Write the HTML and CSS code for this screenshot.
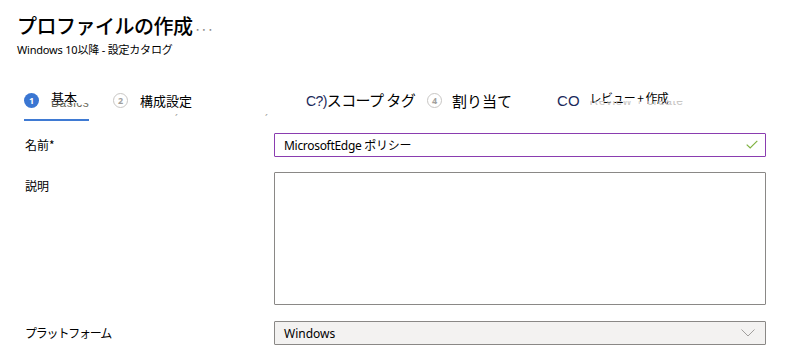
FILE: index.html
```html
<!DOCTYPE html>
<html lang="ja">
<head>
    <meta charset="UTF-8">
    <meta name="viewport" content="width=device-width, initial-scale=1.0">
    <title>プロファイルの作成</title>
    <link rel="stylesheet" href="styles.css">
</head>
<body>

<!-- Header -->
<div class="page-head">
    <h1>プロファイルの作成<span class="more">···</span></h1>
    <div class="subtitle">Windows 10以降 - 設定カタログ</div>
</div>

<!-- Wizard steps -->
<div class="steps">
    <div class="step active">
        <span class="num">1</span>
        <span class="label">基本<span class="ghost ghost-dark">Basics</span></span>
    </div>
    <div class="step step-2">
        <span class="num">2</span>
        <span class="label">構成設定</span>
        <span class="tick tick-a">ˏ</span>
        <span class="tick tick-b">ˏ</span>
    </div>
    <div class="step step-3">
        <span class="label label-lg"><span class="latin">C?)</span>スコープ タグ</span>
    </div>
    <div class="step step-4">
        <span class="num">4</span>
        <span class="label label-lg">割り当て</span>
    </div>
    <div class="step step-5">
        <span class="latin co">CO</span>
        <span class="label label-sm">レビュー + 作成<span class="ghost">Review + create</span></span>
    </div>
</div>

<!-- Form -->
<div class="form">
    <label class="field-label" for="nameInput">名前*</label>
    <div class="field field-valid">
        <input type="text" id="nameInput" value="MicrosoftEdge ポリシー">
        <svg class="check" width="12" height="9" viewBox="0 0 12 9"><path d="M0.7 4.6 L4.2 8 L11.3 0.8" fill="none" stroke="#7fb241" stroke-width="1.2"/></svg>
    </div>

    <label class="field-label label-desc" for="descInput">説明</label>
    <textarea id="descInput"></textarea>

    <label class="field-label label-platform">プラットフォーム</label>
    <div class="select">
        <span>Windows</span>
        <svg class="chevron" width="14" height="8" viewBox="0 0 14 8"><path d="M0.5 0.5 L7 7 L13.5 0.5" fill="none" stroke="#a19f9d" stroke-width="1"/></svg>
    </div>
</div>

</body>
</html>
```

FILE: styles.css
```css
body {
    margin: 0;
    padding: 12px 46px 0 17px;
    font-family: "Noto Sans", "Noto Sans CJK JP", sans-serif;
    color: #000;
    background: #fff;
}
.page-head h1 {
    margin: 0;
    font-family: "Noto Sans CJK JP", sans-serif;
    font-size: 20px;
    font-weight: 500;
    line-height: 27px;
    letter-spacing: -0.5px;
}
.page-head .more {
    font-size: 11px;
    color: #8a8886;
    margin-left: 2px;
    letter-spacing: 0;
}
.subtitle {
    font-size: 11px;
    line-height: 14px;
    margin-top: 0;
    letter-spacing: -0.2px;
}
.steps {
    display: flex;
    align-items: flex-start;
    margin-top: 36px;
    padding-left: 7px;
    height: 28px;
}
.step {
    display: flex;
    align-items: center;
    height: 15px;
    position: relative;
}
.step.active {
    height: 26px;
    align-items: flex-start;
    padding-right: 12px;
    border-bottom: 2px solid #3f7ad3;
}
.num {
    width: 13px;
    height: 13px;
    border: 1px solid #c8c6c4;
    border-radius: 50%;
    color: #a19f9d;
    font-size: 9px;
    font-weight: 700;
    line-height: 13px;
    text-align: center;
    flex-shrink: 0;
}
.active .num {
    width: 15px;
    height: 15px;
    border: none;
    background: #3a76d2;
    color: #fff;
    line-height: 15px;
}
.label {
    position: relative;
    font-family: "Noto Sans CJK JP", sans-serif;
    font-size: 13px;
    line-height: 15px;
    margin-left: 12px;
    white-space: nowrap;
}
.active .label {
    margin-top: -3px;
}
.label-lg {
    font-size: 15px;
    margin-left: 10px;
}
.label-sm {
    font-size: 12px;
    margin-left: 10px;
    letter-spacing: -0.6px;
    top: -3px;
}
.latin {
    font-family: "Liberation Sans", sans-serif;
    font-size: 14px;
    color: #1b2a5a;
}
.step-2 {
    margin-left: 24px;
}
.step-3 {
    margin-left: 114px;
}
.step-3 .label {
    margin-left: 0;
    letter-spacing: -0.6px;
}
.step-4 {
    margin-left: 12px;
}
.step-5 {
    margin-left: 45px;
}
.co {
    font-size: 15px;
}
.ghost {
    position: absolute;
    left: 0;
    top: 11px;
    height: 5px;
    overflow: hidden;
    font-family: "Liberation Sans", sans-serif;
    font-size: 12px;
    line-height: 0px;
    color: #c8c6c4;
    letter-spacing: 0.5px;
}
.ghost-dark {
    color: #6b6a5a;
    top: 13px;
    height: 4px;
}
.tick {
    position: absolute;
    top: 12px;
    font-size: 10px;
    line-height: 10px;
    color: #a19f9d;
}
.tick-a {
    left: 62px;
}
.tick-b {
    left: 152px;
}
.form {
    display: grid;
    grid-template-columns: 249px 492px;
    row-gap: 15px;
    margin-top: 12px;
    padding-left: 8px;
}
.field-label {
    font-family: "Noto Sans CJK JP", sans-serif;
    font-size: 12px;
    line-height: 24px;
}
.label-desc {
    padding-top: 2px;
}
.label-platform {
    margin-top: 1px;
    letter-spacing: -1.2px;
}
.field {
    position: relative;
}
input, textarea, .select {
    box-sizing: border-box;
    width: 492px;
    margin: 0;
    border: 1px solid #8a8886;
    border-radius: 1px;
    font-family: "Noto Sans", "Noto Sans CJK JP", sans-serif;
    font-size: 12px;
    color: #000;
    background: #fff;
    outline: none;
}
input {
    height: 24px;
    padding: 0 9px;
    letter-spacing: -0.3px;
}
.field-valid input {
    border-color: #8a3db0;
}
.check {
    position: absolute;
    right: 8px;
    top: 7px;
}
textarea {
    height: 133px;
    resize: none;
    display: block;
}
.select {
    display: flex;
    align-items: center;
    justify-content: space-between;
    height: 24px;
    margin-top: 1px;
    padding: 0 10px 0 9px;
    background: #f3f2f1;
}
```
